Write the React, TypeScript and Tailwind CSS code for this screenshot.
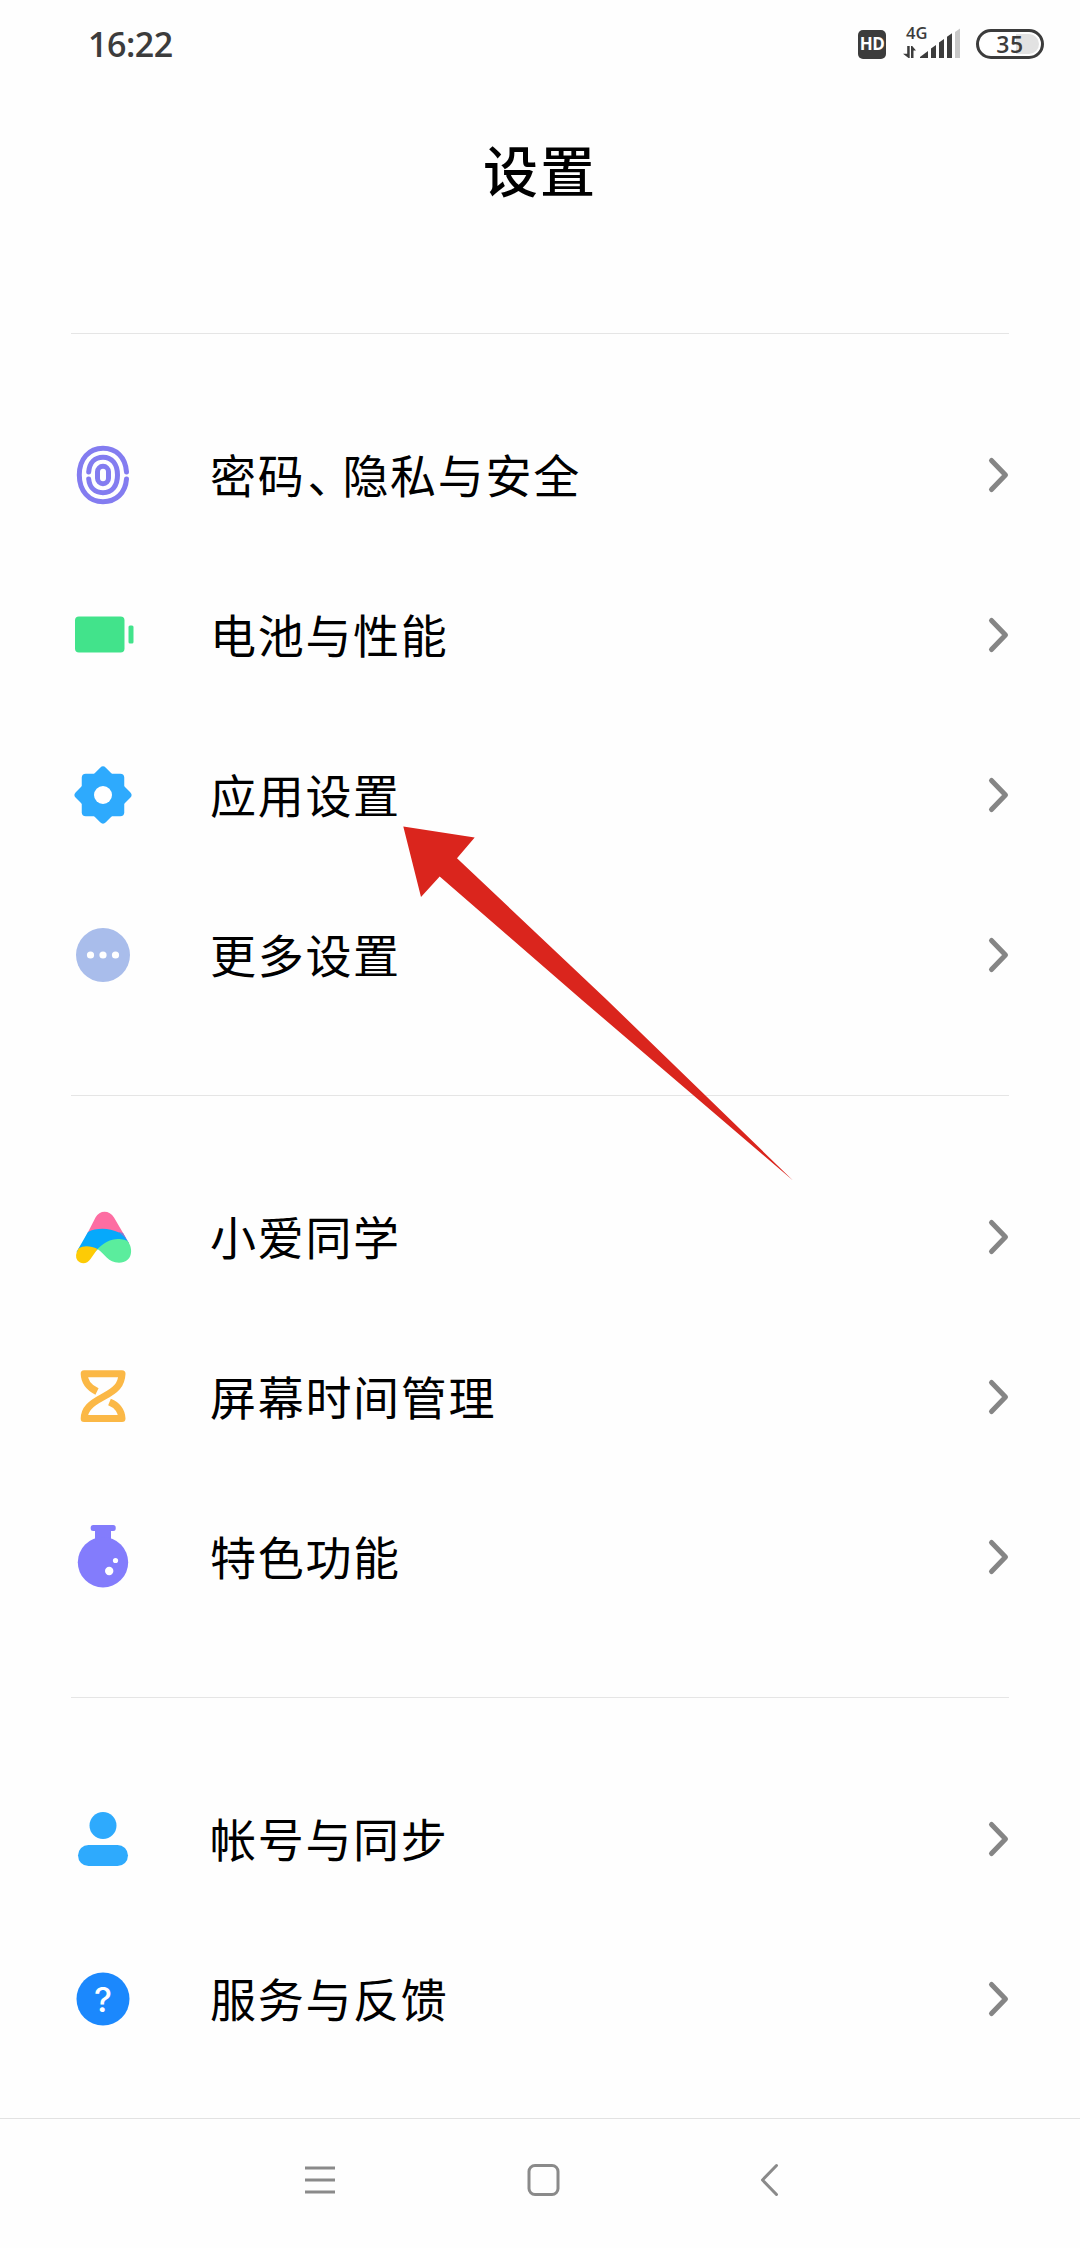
import type { ReactNode } from "react";

type SettingItem = {
  label: ReactNode;
  icon: ReactNode;
};

function FingerprintIcon() {
  return (
    <svg viewBox="0 0 64 64" className="size-16" fill="none" stroke="#837cf0" strokeWidth="5" strokeLinecap="round">
      <path d="M55.5 29C54.5 14 45 5.3 32 5.3C18 5.3 8.3 16 8.3 32S18 58.7 32 58.7C45 58.7 54.5 50 55.5 36" />
      <path d="M17.7 29C18.5 19.5 24 14.3 32 14.3C41 14.3 46.5 21 46.5 32S41 49.7 32 49.7C24 49.7 18.5 44.5 17.7 36" />
      <rect x="26.5" y="23.3" width="11" height="17.4" rx="5.5" />
    </svg>
  );
}

function BatteryIcon() {
  return (
    <svg viewBox="0 0 64 64" className="size-16" fill="#42e38b">
      <rect x="4" y="13.5" width="49.5" height="36" rx="4" />
      <rect x="57.5" y="22.5" width="5" height="18" rx="1.5" />
    </svg>
  );
}

function GearIcon() {
  return (
    <svg viewBox="0 0 64 64" className="size-16" fill="#2eaafd">
      <rect x="10.75" y="10.75" width="42.5" height="42.5" rx="4" />
      <rect x="10.75" y="10.75" width="42.5" height="42.5" rx="4" transform="rotate(45 32 32)" />
      <circle cx="32" cy="32" r="9" fill="#fff" />
    </svg>
  );
}

function MoreIcon() {
  return (
    <svg viewBox="0 0 64 64" className="size-16">
      <circle cx="32" cy="32" r="27" fill="#a9bdeb" />
      <g fill="#fff">
        <circle cx="19.5" cy="32" r="3.6" />
        <circle cx="32" cy="32" r="3.6" />
        <circle cx="44.5" cy="32" r="3.6" />
      </g>
    </svg>
  );
}

function AssistantIcon() {
  return (
    <svg viewBox="0 0 64 64" className="size-16">
      <path d="M14 33L24.5 12.5C28.5 4.8 38.500 4.8 43 12.5L55 33Z" fill="#fd6da2" />
      <path d="M48 27L52 28L58 38H50Z" fill="#7a7fd6" />
      <path d="M5.5 47L17 27C25 22.5 38 22.5 48 27.500Q53.5 31 57 37L42 44H27L18 52Z" fill="#06a9fb" />
      <path d="M7.500 43.5C13 40 20 41 26.5 44L19.5 54C16 59.5 9.500 59 6.500 55.5Q3 51 7.5 43.5Z" fill="#fdcb05" />
      <path d="M26.5 44C33 37 42 32.8 50 34.2Q53.5 34.5 56.5 36C62.5 43 62 57.7 48 57.7C37 57.7 34 49 26.5 44Z" fill="#5bed9d" />
    </svg>
  );
}

function HourglassIcon() {
  return (
    <svg viewBox="0 0 64 64" className="size-16" fill="none" stroke="#fbb846" strokeWidth="7" strokeLinejoin="round">
      <path d="M26 26.5C17 22 13.5 17 13.2 8.8H51C50.5 20 45 25 32 32S13.5 44 13.2 53.5H51C50.5 46 47 40.5 38.5 37" />
    </svg>
  );
}

function FlaskIcon() {
  return (
    <svg viewBox="0 0 64 64" className="size-16" fill="#837cfc">
      <rect x="19.7" y="0" width="25" height="6" rx="2.5" />
      <path d="M24 4H40V18H24Z" />
      <circle cx="32" cy="37.3" r="25.2" />
      <circle cx="38.2" cy="46" r="4.2" fill="#fff" />
      <circle cx="44.5" cy="35.5" r="2.6" fill="#fff" />
    </svg>
  );
}

function AccountIcon() {
  return (
    <svg viewBox="0 0 64 64" className="size-16" fill="#2eaafd">
      <circle cx="32" cy="18.5" r="13.5" />
      <rect x="7" y="38" width="50" height="21" rx="10.5" />
    </svg>
  );
}

function HelpIcon() {
  return (
    <svg viewBox="0 0 64 64" className="size-16">
      <circle cx="32" cy="32" r="26.5" fill="#1b88fd" />
      <text x="32" y="44.5" textAnchor="middle" fontSize="34" fontWeight="500" fill="#fff" className="font-['Inter',sans-serif]">
        ?
      </text>
    </svg>
  );
}

function Chevron() {
  return (
    <svg viewBox="0 0 24 40" className="h-10 w-6" fill="none" stroke="#858585" strokeWidth="5" strokeLinecap="round" strokeLinejoin="round">
      <path d="M6.5 5.5L20.5 20L6.5 34.5" />
    </svg>
  );
}

const groups: SettingItem[][] = [
  [
    {
      label: (
        <>
          密码<span className="pl-0.5 tracking-[-11px]">、</span>隐私与安全
        </>
      ),
      icon: <FingerprintIcon />,
    },
    { label: "电池与性能", icon: <BatteryIcon /> },
    { label: "应用设置", icon: <GearIcon /> },
    { label: "更多设置", icon: <MoreIcon /> },
  ],
  [
    { label: "小爱同学", icon: <AssistantIcon /> },
    { label: "屏幕时间管理", icon: <HourglassIcon /> },
    { label: "特色功能", icon: <FlaskIcon /> },
  ],
  [
    { label: "帐号与同步", icon: <AccountIcon /> },
    { label: "服务与反馈", icon: <HelpIcon /> },
  ],
];

function StatusBar() {
  return (
    <div className="flex h-[88px] items-center justify-between pr-[36px] pl-[88px] text-[#3c3c3c]">
      <span className="font-['Open_Sans',sans-serif] text-[34px] leading-[88px] font-semibold tracking-[-0.5px]">16:22</span>
      <div className="flex items-center">
        <div className="flex h-[29px] w-7 items-center justify-center rounded-[5px] bg-[#3c3c3c] font-['Open_Sans',sans-serif] text-[17px] font-bold tracking-[-0.5px] text-white">
          HD
        </div>
        <svg viewBox="0 -8 60 50" className="ml-4 h-[50px] w-[60px]" fill="#3c3c3c">
          <text x="4" y="12" fontSize="16.5" fontWeight="600" className="font-['Open_Sans',sans-serif]">
            4G
          </text>
          <path d="M5.2 19H7.7V31H6.5L1 26.8H5.2Z" />
          <path d="M9 31V19H10.2L14 23.5H11.5V31Z" />
          <path d="M18 31V30L26 24V31Z" />
          <path d="M29 31V21.5L34 18V31Z" />
          <path d="M37 31V15.5L42 12V31Z" />
          <path d="M45 31V9.8L50 6.3V31Z" />
          <path d="M53 31V5L58 1.5V31Z" fill="#c8c8c8" />
        </svg>
        <div className="ml-[14px] flex h-[30px] w-[68px] items-center justify-center rounded-full border-[3.5px] border-[#3c3c3c] bg-linear-to-r from-white from-60% to-[#e2e2e2] to-60% bg-clip-content p-[2px] font-['Open_Sans',sans-serif] text-[23px] font-semibold tracking-[0.5px]">
          35
        </div>
      </div>
    </div>
  );
}

function SettingRow({ item }: { item: SettingItem }) {
  return (
    <li className="flex h-40 items-center">
      {item.icon}
      <span className="ml-[75px] flex-1 pb-1 text-[46px] leading-none tracking-[1.7px]">{item.label}</span>
      <Chevron />
    </li>
  );
}

function NavigationBar() {
  return (
    <nav className="flex h-[130px] justify-between border-t border-[#e2e2e2] px-[300px] pt-[41px]">
      <svg viewBox="0 0 40 40" className="size-10" fill="none" stroke="#8a8a8a" strokeWidth="3">
        <path d="M5 8H35M5 20H35M5 32H35" />
      </svg>
      <svg viewBox="0 0 40 40" className="mr-[5px] size-10" fill="none" stroke="#8a8a8a" strokeWidth="3">
        <rect x="6" y="5.5" width="29" height="29" rx="6" />
      </svg>
      <svg viewBox="0 0 40 40" className="-mr-2.5 size-10" fill="none" stroke="#8a8a8a" strokeWidth="3" strokeLinecap="round" strokeLinejoin="round">
        <path d="M26.5 5.5L12.5 20L26.5 34.5" />
      </svg>
    </nav>
  );
}

export default function App() {
  return (
    <div className="relative flex h-[2248px] w-[1080px] flex-col overflow-hidden bg-[#fefefe] font-['Noto_Sans_CJK_SC',sans-serif] text-black">
      <StatusBar />
      <h1 className="h-[245px] pt-[52px] text-center text-[55px] leading-[56px] font-medium tracking-[2px]">设置</h1>

      <main className="flex-1 px-[71px]">
        {groups.map((group, index) => (
          <ul key={index} className="border-t border-[#e5e5e5] pt-[61px] pb-[60px] last:pb-0">
            {group.map((item, row) => (
              <SettingRow key={row} item={item} />
            ))}
          </ul>
        ))}
      </main>

      <NavigationBar />

      {/* pointer to the app settings row */}
      <svg viewBox="0 0 392 356" className="absolute top-[825px] left-[402px] h-[356px] w-[392px]" fill="#da251d">
        <path d="M1.3 1.5L72.7 12.6L55 33.3L205 175L391 355.5L180 175L37.7 51.5L19 72Z" />
      </svg>
    </div>
  );
}
